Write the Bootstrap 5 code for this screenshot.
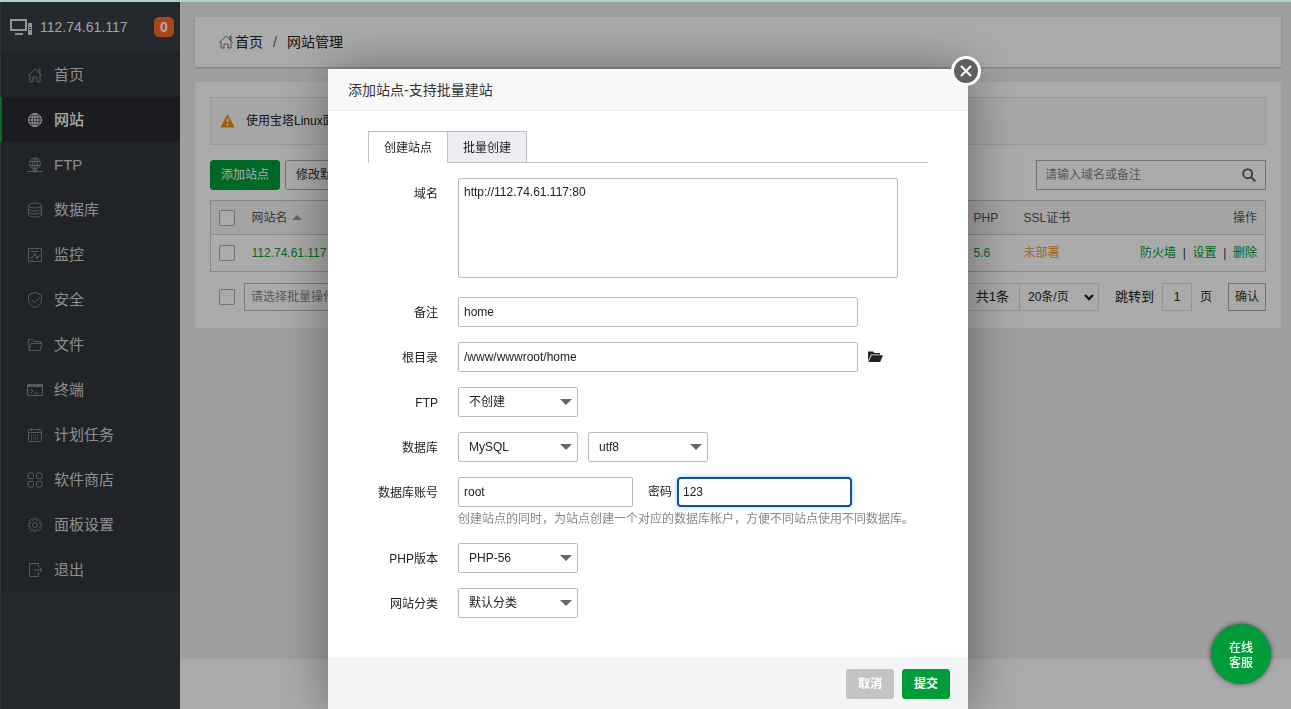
<!DOCTYPE html>
<html lang="zh-CN">
<head>
<meta charset="utf-8">
<meta name="viewport" content="width=device-width, initial-scale=1">
<title>网站管理</title>
<link href="https://cdn.jsdelivr.net/npm/bootstrap@5.3.0/dist/css/bootstrap.min.css" rel="stylesheet">
<style>
:root{--green:#009c3a}
body{font-family:"Liberation Sans","Noto Sans CJK SC",sans-serif;font-size:12px;line-height:18px;color:#222;background:#fff}
svg{display:block;flex:none}
.page{border-top:2px solid #b4cfc5}
.side{width:180px;background:#363e44;border-left:1px solid #464d52}
.host{height:50px;padding:0 6px 0 9px;gap:7px;color:#f4f4f4;font-size:14px}
.host .badge{width:20px;height:20px;padding:0;line-height:20px;font-size:14px;border-radius:5px;background:#ff6a2b}
.menu{background:#31373c}
.menu a{height:45px;padding-left:25px;gap:11px;font-size:15px;color:#d2d4d5;text-decoration:none;border-left:2px solid transparent;margin-left:-1px}
.menu a svg{width:16px;height:16px;opacity:.5}
.menu a.active{background:#282b31;color:#fff;border-left-color:#00a33d;font-weight:500}
.menu a.active svg{opacity:.9}
.line{fill:none;stroke:currentColor;stroke-width:1}
.content-area{background:#efefef;padding:15px 10px 0 15px;min-height:657px}
.crumb{height:50px;padding:0 23px;font-size:14px;background:#fff;box-shadow:0 1px 2px #bbb}
.crumb .slash{margin:0 10px;color:#555}
.panel{margin-top:15px;padding:15px 15px 17px;background:#fff}
.tip{height:48px;padding:0 9px;gap:11px;background:#fafafa;border:1px solid #e4e4e4}
.tools{margin-top:15px;gap:5px}
.btn{font-size:12px;line-height:18px;height:30px;padding:0 10px;border-radius:3px}
.btn-main{background:var(--green);border-color:var(--green);color:#fff}
.btn-main:hover{background:#008632;color:#fff}
.btn-plain{border-color:#aaa;color:#333;background:#fff}
.form-control,.form-select{height:30px;font-size:12px;line-height:18px;color:#222;padding:0 5px;border-color:#bbb;border-radius:2px;background-color:#fff}
.find{width:230px;border:1px solid #aaa;padding-right:9px}
.find input{border:0;height:28px;padding-left:8px;background:transparent}
::placeholder{color:#888!important;opacity:1!important}
.sites{margin:10px 0 11px;border:1px solid #ccc;table-layout:fixed}
.sites th,.sites td{padding:0 8px;font-weight:400;color:#333;vertical-align:middle;border-bottom:1px solid #ccc}
.sites th{height:34px;background:#f6f6f6;color:#555}
.sites td{height:37px}
.sites a{color:var(--green);text-decoration:none}
.sites .warn{color:#f0982e}
.form-check-input{width:16px;height:16px;margin:0;display:block;border:1px solid #aaa;border-radius:2px!important}
.pager{height:28px;padding-left:9px}
.pager .form-control,.pager .form-select,.pager .btn{height:28px;border-radius:0}
.pager .batch{width:150px;color:#888;padding-left:6px;margin-left:9px}
.count{border:1px solid #ddd;border-right:0;height:28px;line-height:26px;padding:0 10px}
.count,.pager label{font-size:13px}
.pager .per{width:80px;border-color:#ddd;padding:0 8px;background-position:right 3px center;background-size:12px;
 --bs-form-select-bg-img:url("data:image/svg+xml,%3Csvg xmlns='http://www.w3.org/2000/svg' viewBox='0 0 12 12'%3E%3Cpath d='M2 4l4 4 4-4' fill='none' stroke='%23222' stroke-width='2.4'/%3E%3C/svg%3E")}
.pager .num{width:30px;border-color:#ddd;padding:0;text-align:center}
.pager .btn{width:38px;padding:0}
.modal-backdrop{--bs-backdrop-opacity:.333;top:2px;height:auto;bottom:0}
.modal{padding-left:5px;font-size:12px}
.modal-dialog{max-width:640px;margin:69px auto 0}
.modal-content{border:0;border-radius:0;box-shadow:1px 1px 50px rgba(0,0,0,.4)}
.modal-header{height:42px;padding:0 20px;background:#f8f8f8;border-bottom:1px solid #eee;border-radius:0}
.modal-title{font-size:14px;line-height:20px;font-weight:400;color:#333}
.closer{position:absolute;top:-13px;right:-13px;width:30px;height:30px;border:3px solid #fff;border-radius:50%;background:#606060;padding:5px}
.modal-body{padding:20px 40px 40px}
.nav-tabs{border-bottom:1px solid #bfbfc9;margin-bottom:15px}
.nav-tabs .nav-link{width:80px;height:32px;padding:2px 0 0;color:#222;border:1px solid #bfbfc9;border-radius:0;background:#ededf2;margin-right:-1px}
.nav-tabs .nav-link.active{background:#fff;border-color:#bfbfc9 #bfbfc9 #fff;color:#222}
.line-row{gap:20px;margin-bottom:15px}
.line-row>label{width:70px;text-align:right;padding-top:2px;line-height:28px;flex:none;white-space:nowrap}
.domain-row{margin-bottom:19px}
.line-row textarea.form-control{height:100px;width:440px;padding:4px 5px;resize:none}
.w-long{width:400px}.w-half{width:175px}
.drop{width:120px;padding-left:10px;background-position:right 5px center;background-size:12px;
 --bs-form-select-bg-img:url("data:image/svg+xml,%3Csvg xmlns='http://www.w3.org/2000/svg' viewBox='0 0 12 12'%3E%3Cpath d='M0 3h12L6 9z' fill='%23666'/%3E%3C/svg%3E")}
.drop-pair{gap:10px}
.password-label{margin:0 5px 0 15px}
.chosen,.chosen:focus{border:2px solid #14509b;border-radius:4px;box-shadow:0 0 6px #9fd8ff;padding-left:4px}
.hint{color:#888;margin-top:3px;white-space:nowrap}
.modal-footer{height:51px;padding:0 18px;gap:8px;background:#f3f4f6;border-top:1px solid #e8eaec;border-radius:0}
.modal-footer .btn{width:48px;padding:0;margin:0;font-weight:700}
.btn-quiet,.btn-quiet:hover{background:#c4c4c4;border-color:#c4c4c4;color:#fff}
.service{position:fixed;right:20px;bottom:25px;width:60px;height:60px;z-index:1060;padding:3px 17px 0;border:0;border-radius:50%;background:var(--green);color:#fff;font-weight:500;line-height:15px;box-shadow:0 0 5px rgba(0,0,0,.6)}
</style>
</head>
<body>
<div class="page d-flex min-vh-100">
  <aside class="side flex-shrink-0">
    <div class="host d-flex align-items-center">
      <svg width="23" height="18" viewBox="0 0 23 18"><path d="M1 2h15v10H1z" fill="none" stroke="#ddd" stroke-width="2"/><path d="M5 15h8v2H5zM18 5h4v12h-4z" fill="#ddd"/><path d="M19 9h2v1h-2zM19 11h2v1h-2z" fill="#444"/></svg>
      <span>112.74.61.117</span><span class="badge ms-auto">0</span>
    </div>
    <nav class="menu">
      <a href="#" class="d-flex align-items-center"><svg viewBox="0 0 16 16" class="line"><path d="M1 9l7-7 7 7M3 8v7h3v-5h4v5h3V8M12 6V2h1v5"/></svg>首页</a>
      <a href="#" class="d-flex align-items-center active"><svg viewBox="0 0 16 16" class="line"><circle cx="8" cy="8" r="6.500"/><ellipse cx="8" cy="8" rx="3" ry="6.500"/><path d="M8 1v14M1 8h14M2 5h12M2 11h12"/></svg>网站</a>
      <a href="#" class="d-flex align-items-center"><svg viewBox="0 0 16 16" class="line"><circle cx="8" cy="6.500" r="5.500"/><ellipse cx="8" cy="6.500" rx="2.500" ry="5.500"/><path d="M8 1v13M3 4.500h10M3 8.500h10M0 14.500h16M6 13h4v2H6z"/></svg>FTP</a>
      <a href="#" class="d-flex align-items-center"><svg viewBox="0 0 16 16" class="line"><ellipse cx="8" cy="3.500" rx="6.500" ry="2.500"/><path d="M1.500 3.500v9c0 3.300 13 3.300 13 0v-9M1.500 6.500c0 3.300 13 3.300 13 0M1.500 9.500c0 3.300 13 3.300 13 0"/></svg>数据库</a>
      <a href="#" class="d-flex align-items-center"><svg viewBox="0 0 16 16" class="line"><path d="M1.500 1.500h13v13h-13zM4 4.500h8M3 11l3-1 2-4 2 6 1-3h2M4 13h2"/></svg>监控</a>
      <a href="#" class="d-flex align-items-center"><svg viewBox="0 0 16 16" class="line"><path d="M8 .5l6.500 2.500v5c0 4-3.500 6.500-6.500 7.500C5 14.500 1.500 12 1.500 8V3zM4.500 7.500l3 3 5-5"/></svg>安全</a>
      <a href="#" class="d-flex align-items-center"><svg viewBox="0 0 16 16" class="line"><path d="M2 13.500l-.5-11h4l1.500 2h6.500v2M2 13.500h11l2-7H4z"/></svg>文件</a>
      <a href="#" class="d-flex align-items-center"><svg viewBox="0 0 16 16" class="line"><path d="M.5 2.500h15v11H.5zM.5 4.500h15M.5 3.500h15M4 7l2 2-2 2M7.500 11h4"/></svg>终端</a>
      <a href="#" class="d-flex align-items-center"><svg viewBox="0 0 16 16" class="line"><rect x="1.500" y="2.500" width="13" height="12" rx="1"/><path d="M1.500 5.500h13M4.500 1v3M11.500 1v3"/><path d="M4 8h8M4 10h8M4 12h8" stroke-dasharray="1 1"/></svg>计划任务</a>
      <a href="#" class="d-flex align-items-center"><svg viewBox="0 0 16 16" class="line"><rect x="1" y="1" width="5.500" height="5.500" rx="1"/><rect x="9.500" y="1" width="5.500" height="5.500" rx="1"/><rect x="1" y="9.500" width="5.500" height="5.500" rx="1"/><rect x="9.500" y="9.500" width="5.500" height="5.500" rx="1"/></svg>软件商店</a>
      <a href="#" class="d-flex align-items-center"><svg viewBox="0 0 16 16" class="line"><circle cx="8" cy="8" r="2.500"/><path d="M6.800 1.500h2.400l.5 2 2.200-1 1.600 1.600-1 2.200 2 .5v2.400l-2 .5 1 2.200-1.600 1.600-2.200-1-.5 2H6.800l-.5-2-2.200 1-1.600-1.600 1-2.200-2-.5V6.800l2-.5-1-2.200 1.600-1.600 2.200 1z"/></svg>面板设置</a>
      <a href="#" class="d-flex align-items-center"><svg viewBox="0 0 16 16" class="line"><path d="M11.500 5V1.500h-9v13h9V11M7 8h8M12.500 5.500L15 8l-2.500 2.500"/></svg>退出</a>
    </nav>
  </aside>
  <main class="flex-grow-1">
    <div class="content-area">
      <div class="crumb d-flex align-items-center">
        <svg width="17" height="16" viewBox="0 0 17 16" class="line"><path d="M1 9l7-7 7 7M3 8v6h3v-4h4v4h3V8M12 6V2h1v5" opacity=".6"/></svg>
        <span>首页</span><span class="slash">/</span><span>网站管理</span>
      </div>
      <section class="panel">
        <div class="tip d-flex align-items-center">
          <svg width="15" height="14" viewBox="0 0 15 14"><path d="M7.500 1L14 13H1z" fill="#f08a1d" stroke="#f08a1d" stroke-linejoin="round"/><path d="M6.600 4.500h1.800l-.3 4.200H6.900zM6.600 10h1.800v1.600H6.600z" fill="#fff"/></svg>
          <span>使用宝塔Linux面板</span>
        </div>
        <div class="tools d-flex">
          <button class="btn btn-main">添加站点</button>
          <button class="btn btn-plain">修改默认页</button>
          <div class="find d-flex align-items-center ms-auto">
            <input class="form-control" aria-label="搜索" placeholder="请输入域名或备注">
            <svg width="14" height="14" viewBox="0 0 14 14"><circle cx="5.700" cy="5.700" r="4.500" fill="none" stroke="#666" stroke-width="2"/><path d="M9 9l4.300 4.300" stroke="#666" stroke-width="2.200"/></svg>
          </div>
        </div>
        <table class="sites w-100">
          <colgroup><col style="width:33px"><col><col style="width:50px"><col style="width:80px"><col style="width:170px"></colgroup>
          <thead><tr><th><input type="checkbox" class="form-check-input" aria-label="全选"></th><th><span class="d-inline-flex align-items-center gap-1">网站名<svg width="10" height="5" viewBox="0 0 10 5"><path d="M0 5l5-5 5 5z" fill="#999"/></svg></span></th><th>PHP</th><th>SSL证书</th><th class="text-end">操作</th></tr></thead>
          <tbody><tr><td><input type="checkbox" class="form-check-input" aria-label="选择"></td><td><a href="#">112.74.61.117</a></td><td><a href="#">5.6</a></td><td><a href="#" class="warn">未部署</a></td><td class="text-end text-nowrap"><a href="#">防火墙</a>&nbsp; | &nbsp;<a href="#">设置</a>&nbsp; | &nbsp;<a href="#">删除</a></td></tr></tbody>
        </table>
        <div class="pager d-flex align-items-center">
          <input type="checkbox" class="form-check-input" aria-label="批量">
          <select class="form-select batch" aria-label="批量操作"><option>请选择批量操作</option></select>
          <span class="count ms-auto">共1条</span>
          <select class="form-select per" aria-label="每页条数"><option>20条/页</option></select>
          <label for="jump" class="ms-3 me-2">跳转到</label>
          <input id="jump" class="form-control num" value="1"><span class="ms-2">页</span>
          <button class="btn btn-plain ms-3">确认</button>
        </div>
      </section>
    </div>
  </main>
</div>

<div class="modal-backdrop show"></div>
<div class="modal show d-block overflow-hidden" tabindex="-1" role="dialog" aria-labelledby="dlgTitle">
  <div class="modal-dialog">
    <form class="modal-content">
      <div class="modal-header"><h1 class="modal-title" id="dlgTitle">添加站点-支持批量建站</h1>
        <button type="button" class="closer" aria-label="关闭"><svg width="14" height="14" viewBox="0 0 14 14"><path d="M2 2l10 10M12 2L2 12" stroke="#fff" stroke-width="2.200"/></svg></button>
      </div>
      <div class="modal-body">
        <div class="nav nav-tabs"><button type="button" class="nav-link active">创建站点</button><button type="button" class="nav-link">批量创建</button></div>
        <div class="line-row domain-row d-flex"><label for="domain">域名</label><textarea id="domain" class="form-control">http://112.74.61.117:80</textarea></div>
        <div class="line-row d-flex"><label for="note">备注</label><input id="note" class="form-control w-long" value="home"></div>
        <div class="line-row d-flex"><label for="root">根目录</label><div class="d-flex align-items-center"><input id="root" class="form-control w-long" value="/www/wwwroot/home"><svg class="ms-2" width="18" height="14" viewBox="0 0 18 14"><path d="M2 11V1.500h5L8.500 3H14v1.500H5z" fill="#222"/><path d="M5.500 5.200H17L14.200 12H2.500z" fill="#222"/></svg></div></div>
        <div class="line-row d-flex"><label for="ftp">FTP</label><select id="ftp" class="form-select drop"><option>不创建</option></select></div>
        <div class="line-row d-flex"><label for="db">数据库</label><div class="drop-pair d-flex"><select id="db" class="form-select drop"><option>MySQL</option></select><select class="form-select drop" aria-label="编码"><option>utf8</option></select></div></div>
        <div class="line-row d-flex"><label for="user">数据库账号</label><div><div class="d-flex align-items-center"><input id="user" class="form-control w-half" value="root"><label for="pass" class="password-label">密码</label><input id="pass" class="form-control w-half chosen" value="123"></div><div class="hint">创建站点的同时，为站点创建一个对应的数据库帐户，方便不同站点使用不同数据库。</div></div></div>
        <div class="line-row d-flex"><label for="php">PHP版本</label><select id="php" class="form-select drop"><option>PHP-56</option></select></div>
        <div class="line-row d-flex mb-0"><label for="kind">网站分类</label><select id="kind" class="form-select drop"><option>默认分类</option></select></div>
      </div>
      <div class="modal-footer"><button type="button" class="btn btn-quiet">取消</button><button type="submit" class="btn btn-main">提交</button></div>
    </form>
  </div>
</div>
<button class="service">在线客服</button>
<script src="https://cdn.jsdelivr.net/npm/bootstrap@5.3.0/dist/js/bootstrap.bundle.min.js"></script>
</body>
</html>
